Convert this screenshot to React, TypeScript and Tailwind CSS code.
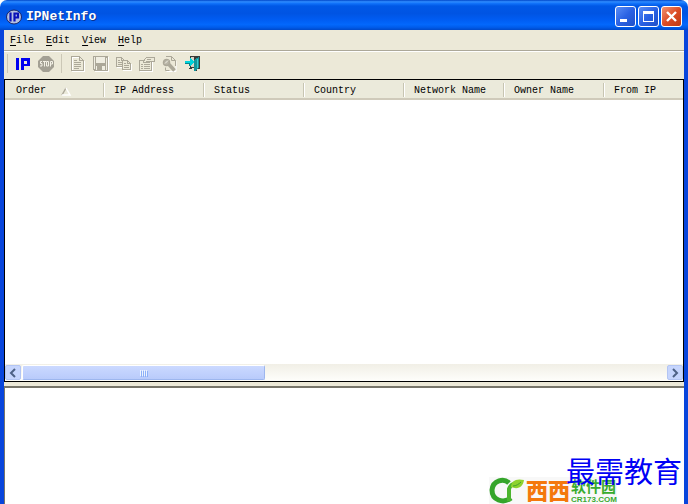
import React from 'react';

const menus = ['File', 'Edit', 'View', 'Help'];

const columns = ['Order', 'IP Address', 'Status', 'Country', 'Network Name', 'Owner Name', 'From IP'];

const GRAY = '#aca899';

const IpIcon = () => (
  <svg width="16" height="16" viewBox="0 0 16 16" fill="#0000f0" shapeRendering="crispEdges">
    <path d="M1 2h3v12H1z" />
    <path d="M6 2h8l1 1v6l-1 1H9v4H6zM9 5v3h3V5z" fillRule="evenodd" />
  </svg>
);

const StopIcon = () => (
  <svg width="18" height="18" viewBox="0 0 18 18">
    <path d="M6 1h6l5 5v6l-5 5H6l-5-5V6z" fill="#a3a094" />
    <path
      d="M5 6.500H3.500v2H5v2.500H3M6 6.500h3M7.500 6.500V11.500M9.500 6.500h2v4.500h-2zM13.500 11.500V6.500h2v2.500h-2"
      fill="none"
      stroke="#f3f1e6"
    />
  </svg>
);

const ReportIcon = () => (
  <svg width="16" height="16" viewBox="0 0 16 16" fill="none" stroke={GRAY} shapeRendering="crispEdges">
    <path d="M2.500 14V1.500h6M14.500 5v11M2 15.500h12" stroke="#fff" />
    <path d="M1.500 14.500V.5h8l4 4v10zM9.500 .5v4h4M4 4.500h3M4 6.500h7M4 8.500h7M4 10.500h7M4 12.500h5" />
  </svg>
);

const SaveIcon = () => (
  <svg width="16" height="16" viewBox="0 0 16 16" shapeRendering="crispEdges">
    <path d="M1 1h15v15H2z" fill="#fff" />
    <path d="M0 0h15v15H1l-1-1z" fill={GRAY} />
    <path d="M3 1h9v6H3zM1 1h1v12H1zM13 2h1v12h-1z" fill="#f0eee2" />
    <path d="M3 10h9v4H3z" fill="#f0eee2" />
    <path d="M4 10h5v4H4z" fill={GRAY} />
  </svg>
);

const CopyIcon = () => (
  <svg width="16" height="16" viewBox="0 0 16 16" fill="none" stroke={GRAY} shapeRendering="crispEdges">
    <path d="M.5 10.500V1.500h5l3 3v6zM5.500 1.500v3h3M2 4.500h2M2 6.500h5M2 8.500h5" />
    <path d="M6.500 13.500V4.500h5l3 3v6z" fill="#ece9d8" />
    <path d="M11.500 4.500v3h3M8 7.500h2M8 9.500h5M8 11.500h5" />
    <path d="M7 14.500h9M15.500 8v7M1 11.500h5" stroke="#fff" />
  </svg>
);

const PropertiesIcon = () => (
  <svg width="16" height="16" viewBox="0 0 16 16" fill="none" stroke={GRAY} shapeRendering="crispEdges">
    <path d="M1 15.500h12M13.500 6v10" stroke="#fff" />
    <path d="M.5 4.500h12v10H.5zM2 8.500h2M5 8.500h6M2 10.500h2M5 10.500h6M2 12.500h2M5 12.500h6" />
    <path d="M4 6l3-4 2-1h6v4h-3L9 7z" fill="#ece9d8" />
    <path d="M8 3.500h4M7 5.500h3" />
  </svg>
);

const FindIcon = () => (
  <svg width="16" height="16" viewBox="0 0 16 16" fill="none" stroke={GRAY}>
    <path d="M4.500 15.500h9.500V5" stroke="#fff" />
    <path d="M3.500 11.500v3h4M13.500 10V4.500l-4-4H4" />
    <path d="M9.500 .5v4h4" />
    <circle cx="4.500" cy="6.500" r="3" fill="#b9b5a7" strokeWidth="1.500" />
    <path d="M7 8.500l5.500 6" strokeWidth="3.500" />
    <path d="M3 7.500l3-3" stroke="#f3f1e6" />
  </svg>
);

const ExitIcon = () => (
  <svg width="16" height="16" viewBox="0 0 16 16" shapeRendering="crispEdges">
    <path d="M5 0h10v13h-3v2h-2v-2H9v-1H7v1H4v-1h1z" fill="#3a3a38" />
    <path d="M6 1h3v10H6z" fill="#d8d5c6" />
    <path d="M9 4l5-3v11l-4 3H9z" fill="#15949a" />
    <path d="M12 3h1v9h-1z" fill="#35cdd2" />
    <path d="M0 5h5V2l4 4-4 4V7H0z" fill="#00d4dc" />
    <path d="M0 7h5v3H4V8H0z" fill="#07838a" />
  </svg>
);

const tools = [
  { name: 'Report', Icon: ReportIcon },
  { name: 'Save', Icon: SaveIcon },
  { name: 'Copy', Icon: CopyIcon },
  { name: 'Properties', Icon: PropertiesIcon },
  { name: 'Find', Icon: FindIcon },
  { name: 'Exit', Icon: ExitIcon },
];

const ToolButton: React.FC<{ name: string; children: React.ReactNode }> = ({ name, children }) => (
  <button type="button" aria-label={name} className="flex h-6 w-[23px] items-center justify-center">
    {children}
  </button>
);

const captionButton = 'flex size-[21px] items-center justify-center rounded-[3px] border border-white';

const TitleBar = () => (
  <header className="flex h-[30px] shrink-0 items-center rounded-t-[7px] bg-[linear-gradient(to_bottom,#0046c8_0%,#2f8cff_6%,#0f70f8_12%,#0058e6_20%,#0054e3_45%,#005cf2_65%,#0368fc_82%,#005ae8_92%,#0048c8_100%)] pt-[3px] pr-[6px] pl-[6px]">
    <svg width="16" height="16" viewBox="0 0 16 16" className="mr-1 shrink-0">
      <ellipse cx="8" cy="8" rx="7.500" ry="7" fill="#b4bfe0" stroke="#16246c" />
      <path d="M4.500 3.500v9M8.500 3.500v9M8.500 4.500h3.500v4H8.500" fill="none" stroke="#0a10b8" strokeWidth="2.200" />
    </svg>
    <h1 className="flex-1 pt-px font-['Liberation_Mono',monospace] text-[13px] leading-4 font-bold text-white [text-shadow:1px_1px_0_#0a318f]">
      IPNetInfo
    </h1>
    <div className="flex gap-[2px]">
      <button type="button" aria-label="Minimize" className={`${captionButton} bg-linear-to-br from-[#5a8df5] via-[#2a62e4] to-[#1f50c8]`}>
        <svg width="19" height="19" viewBox="0 0 19 19" shapeRendering="crispEdges">
          <path d="M4 12h7v3H4z" fill="#fff" />
        </svg>
      </button>
      <button type="button" aria-label="Maximize" className={`${captionButton} bg-linear-to-br from-[#5a8df5] via-[#2a62e4] to-[#1f50c8]`}>
        <svg width="19" height="19" viewBox="0 0 19 19" shapeRendering="crispEdges">
          <path d="M4 4h11v11H4zM5 7v7h9V7z" fill="#fff" fillRule="evenodd" />
        </svg>
      </button>
      <button type="button" aria-label="Close" className={`${captionButton} bg-linear-to-br from-[#f0906f] via-[#dc4c25] to-[#c03a12]`}>
        <svg width="19" height="19" viewBox="0 0 19 19">
          <path d="M5 5l9 9M14 5l-9 9" stroke="#fff" strokeWidth="2.400" />
        </svg>
      </button>
    </div>
  </header>
);

const scrollArrow = 'flex h-[15px] w-4 shrink-0 items-center justify-center rounded-[2px] border border-[#b3c5f3] bg-[#c6d5fd]';

const ScrollBar = () => (
  <div className="flex h-[17px] items-center bg-linear-to-b from-[#f1efe6] to-[#fefefb]">
    <button type="button" aria-label="Scroll left" className={scrollArrow}>
      <svg width="10" height="10" viewBox="0 0 10 10" fill="none" stroke="#4d6185" strokeWidth="2">
        <path d="M7 1L3 5l4 4" />
      </svg>
    </button>
    <div className="flex flex-1">
      <div className="ml-px flex h-[15px] w-[243px] items-center justify-center gap-px rounded-[2px] border border-[#9db6ee] border-t-white border-l-white bg-linear-to-b from-[#cbd9ff] to-[#b9cbfb]">
        {[0, 1, 2, 3].map(i => (
          <span key={i} className="h-[6px] w-px bg-[#eef4fe] shadow-[1px_1px_0_#8cb0f8]" />
        ))}
      </div>
    </div>
    <button type="button" aria-label="Scroll right" className={scrollArrow}>
      <svg width="10" height="10" viewBox="0 0 10 10" fill="none" stroke="#4d6185" strokeWidth="2">
        <path d="M3 1l4 4-4 4" />
      </svg>
    </button>
  </div>
);

const Watermark = () => (
  <div className="absolute right-0 bottom-0 h-[50px] w-[200px]">
    <div className="absolute bottom-0 left-[5px] flex h-[27px] items-start bg-[#f8f8f8]">
      <svg width="37" height="27" viewBox="0 0 37 27" fill="none">
        <path d="M20 6C15 1 4 3 3 13c0 10 11 14 19 8" stroke="#35a52b" strokeWidth="5" />
        <path d="M20 24V12c1-3 3-5 6-5" stroke="#4bb52d" strokeWidth="4" />
        <path d="M22 10c0-6 5-9 13-7-1 7-6 10-13 7z" fill="#8ed22f" />
        <path d="M24 9c3 0 6-2 8-4" stroke="#3fa32a" />
      </svg>
      <span className="font-['Noto_Sans_CJK_SC',sans-serif] text-[22px] leading-[25px] font-black text-[#f4780c]">西西</span>
      <span className="ml-px flex flex-col text-[#39ab2e]">
        <span className="font-['Noto_Sans_CJK_SC',sans-serif] text-[15px] leading-[18px] font-bold">软件园</span>
        <span className="font-['Liberation_Sans',sans-serif] text-[8px] leading-[9px] font-bold">CR173.COM</span>
      </span>
    </div>
    <span className="absolute top-0 right-[2px] font-['Noto_Sans_CJK_SC',sans-serif] text-[29px] leading-8 font-normal text-[#0000f5]">
      最需教育
    </span>
  </div>
);

const App: React.FC = () => {
  return (
    <div className="flex min-h-screen flex-col bg-white font-['Liberation_Mono',monospace] text-[10px] leading-3 text-black">
      <TitleBar />

      <div className="flex flex-1 flex-col border-x-4 border-[#0845dc] bg-[#ece9d8]">
        {/* Menu */}
        <nav className="flex h-[21px] items-center border-b border-[#aca899]">
          {menus.map(menu => (
            <button key={menu} type="button" className="h-5 px-[6px] pt-[2px]">
              <u className="underline-offset-2">{menu[0]}</u>
              {menu.slice(1)}
            </button>
          ))}
        </nav>

        {/* Toolbar */}
        <div className="flex h-7 border-t border-white pl-[3px]">
          <span className="mt-[2px] mr-[3px] h-[19px] w-px bg-[#cbc7b6]" />
          <ToolButton name="IP addresses"><IpIcon /></ToolButton>
          <ToolButton name="Stop"><StopIcon /></ToolButton>
          <span className="mx-1 mt-[2px] h-[19px] w-px bg-[#cbc7b6]" />
          {tools.map(({ name, Icon }) => (
            <ToolButton key={name} name={name}><Icon /></ToolButton>
          ))}
        </div>

        {/* Result list */}
        <section className="border border-black bg-white">
          <table className="w-full table-fixed border-collapse">
            <thead>
              <tr className="h-5 bg-[#ebeadb] shadow-[inset_0_-2px_0_#cfcaba]">
                {columns.map((column, i) => (
                  <th key={column} scope="col" className="group w-[100px] p-0 text-left font-normal whitespace-nowrap last:w-auto">
                    <div className="flex h-[14px] items-center border-r border-white pt-[2px] pl-[9px] shadow-[inset_-1px_0_0_#c7c5b2] group-first:pl-[11px] group-last:border-r-0 group-last:shadow-none">
                      {column}
                      {i === 0 && (
                        <svg width="11" height="9" viewBox="0 0 11 9" className="ml-[15px]">
                          <path d="M1 8L5 1" stroke="#aca899" strokeWidth="1.500" />
                          <path d="M5 1l4 7H1" fill="none" stroke="#fff" strokeWidth="1.500" />
                        </svg>
                      )}
                    </div>
                  </th>
                ))}
              </tr>
            </thead>
          </table>
          <div className="h-[264px]" />
          <ScrollBar />
        </section>

        {/* Details */}
        <section className="relative mt-1 flex-1 border-t-2 border-l border-t-[#77756a] border-l-[#77756a] bg-white">
          <Watermark />
        </section>
      </div>
    </div>
  );
};

export default App;
